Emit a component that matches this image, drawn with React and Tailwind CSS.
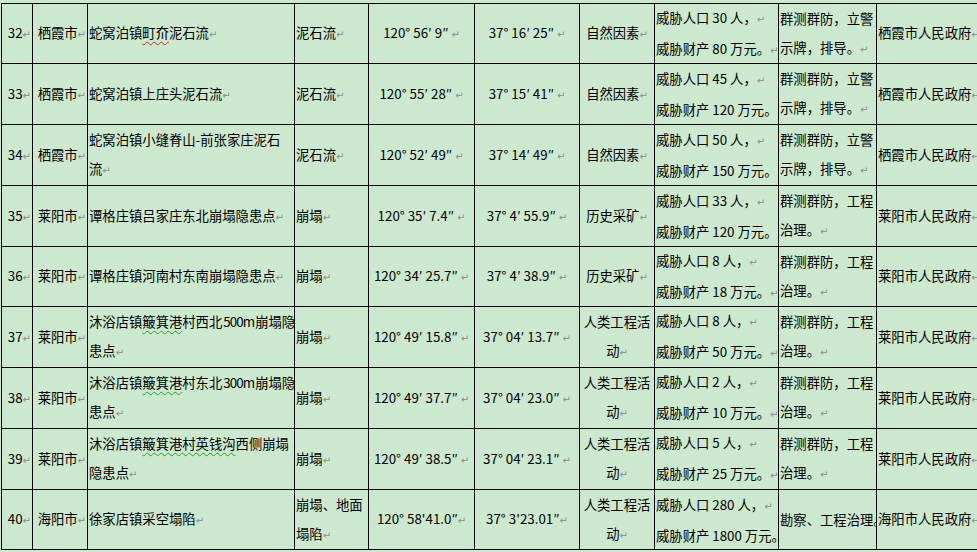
import React from "react";

const R = "↵";

const rows = [
  {
    n: "32", city: "栖霞市",
    loc: [["蛇窝泊镇", { t: "町夼", u: "red" }, "泥石流" + R]],
    type: ["泥石流" + R], lon: "120° 56′ 9″ " + R, lat: "37° 16′ 25″ " + R,
    cause: ["自然因素" + R],
    threat: ["威胁人口 30 人，" + R, "威胁财产 80 万元。" + R],
    measure: ["群测群防，立警", "示牌，排导。" + R], gov: "栖霞市人民政府" + R,
  },
  {
    n: "33", city: "栖霞市",
    loc: ["蛇窝泊镇上庄头泥石流" + R],
    type: ["泥石流" + R], lon: "120° 55′ 28″ " + R, lat: "37° 15′ 41″ " + R,
    cause: ["自然因素" + R],
    threat: ["威胁人口 45 人，" + R, "威胁财产 120 万元。"],
    measure: ["群测群防，立警", "示牌，排导。" + R], gov: "栖霞市人民政府" + R,
  },
  {
    n: "34", city: "栖霞市",
    loc: ["蛇窝泊镇小缝脊山-前张家庄泥石", "流" + R],
    type: ["泥石流" + R], lon: "120° 52′ 49″ " + R, lat: "37° 14′ 49″ " + R,
    cause: ["自然因素" + R],
    threat: ["威胁人口 50 人，" + R, "威胁财产 150 万元。"],
    measure: ["群测群防，立警", "示牌，排导。" + R], gov: "栖霞市人民政府" + R,
  },
  {
    n: "35", city: "莱阳市",
    loc: ["谭格庄镇吕家庄东北崩塌隐患点" + R],
    type: ["崩塌" + R], lon: "120° 35′ 7.4″ " + R, lat: "37° 4′ 55.9″ " + R,
    cause: ["历史采矿" + R],
    threat: ["威胁人口 33 人，" + R, "威胁财产 120 万元。"],
    measure: ["群测群防，工程", "治理。" + R], gov: "莱阳市人民政府" + R,
  },
  {
    n: "36", city: "莱阳市",
    loc: ["谭格庄镇河南村东南崩塌隐患点" + R],
    type: ["崩塌" + R], lon: "120° 34′ 25.7″ " + R, lat: "37° 4′ 38.9″ " + R,
    cause: ["历史采矿" + R],
    threat: ["威胁人口 8 人，" + R, "威胁财产 18 万元。" + R],
    measure: ["群测群防，工程", "治理。" + R], gov: "莱阳市人民政府" + R,
  },
  {
    n: "37", city: "莱阳市",
    loc: [["沐浴店镇", { t: "簸箕港", u: "green" }, "村西北", { t: "500m", num: true }, "崩塌隐"], "患点" + R],
    type: ["崩塌" + R], lon: "120° 49′ 15.8″ " + R, lat: "37° 04′ 13.7″ " + R,
    cause: ["人类工程活", "动" + R],
    threat: ["威胁人口 8 人，" + R, "威胁财产 50 万元。" + R],
    measure: ["群测群防，工程", "治理。" + R], gov: "莱阳市人民政府" + R,
  },
  {
    n: "38", city: "莱阳市",
    loc: [["沐浴店镇", { t: "簸箕港", u: "green" }, "村东北", { t: "300m", num: true }, "崩塌隐"], "患点" + R],
    type: ["崩塌" + R], lon: "120° 49′ 37.7″ " + R, lat: "37° 04′ 23.0″ " + R,
    cause: ["人类工程活", "动" + R],
    threat: ["威胁人口 2 人，" + R, "威胁财产 10 万元。" + R],
    measure: ["群测群防，工程", "治理。" + R], gov: "莱阳市人民政府" + R,
  },
  {
    n: "39", city: "莱阳市",
    loc: [["沐浴店镇", { t: "簸箕港村英钱沟", u: "green" }, "西侧崩塌"], "隐患点" + R],
    type: ["崩塌" + R], lon: "120° 49′ 38.5″ " + R, lat: "37° 04′ 23.1″ " + R,
    cause: ["人类工程活", "动" + R],
    threat: ["威胁人口 5 人，" + R, "威胁财产 25 万元。" + R],
    measure: ["群测群防，工程", "治理。" + R], gov: "莱阳市人民政府" + R,
  },
  {
    n: "40", city: "海阳市",
    loc: ["徐家店镇采空塌陷" + R],
    type: ["崩塌、地面", "塌陷" + R], lon: "120° 58'41.0″" + R, lat: "37° 3'23.01″" + R,
    cause: ["人类工程活", "动" + R],
    threat: ["威胁人口 280 人，" + R, "威胁财产 1800 万元。"],
    measure: ["勘察、工程治理。"], gov: "海阳市人民政府" + R,
  },
];

const alignCls = {
  left: "items-start pl-[1px]",
  center: "items-center",
  right: "items-end pr-[1px]",
};

function Mark() {
  return <span className="text-[10px] text-[#8c8c8c] font-['DejaVu_Sans',sans-serif]">{R}</span>;
}

function Text({ s }) {
  if (s.endsWith(R)) {
    return (
      <>
        {s.slice(0, -1)}
        <Mark />
      </>
    );
  }
  return s;
}

function Line({ line }) {
  if (typeof line === "string") return <Text s={line} />;
  return line.map((seg, i) => {
    if (typeof seg === "string") return <Text key={i} s={seg} />;
    if (seg.num) {
      return (
        <span key={i} className="mx-[1px] tracking-[-0.9px]">
          {seg.t}
        </span>
      );
    }
    return (
      <span
        key={i}
        className={`underline decoration-wavy underline-offset-[3px] decoration-1 ${seg.u === "red" ? "decoration-[#e02020]" : "decoration-[#2aa02a]"}`}
      >
        {seg.t}
      </span>
    );
  });
}

function Cell({ lines, align = "left" }) {
  return (
    <div className={`border-r border-b border-black flex flex-col justify-center overflow-hidden ${alignCls[align]}`}>
      {lines.map((l, i) => (
        <div key={i} className="whitespace-nowrap">
          <Line line={l} />
        </div>
      ))}
    </div>
  );
}

export default function App() {
  return (
    <div className="w-[977px] h-[552px] overflow-hidden bg-[#cce8cf] pt-[3px] pl-[1px] text-black text-[13.33px] leading-[29px] font-['Noto_Sans_CJK_SC',sans-serif]">
      <div className="w-[1100px] grid grid-cols-[31px_55px_207px_74px_106px_105px_75px_124px_98px_120px] grid-rows-[60px_61px_61px_61px_60px_61px_61px_61px_60px] border-t border-l border-black">
        {rows.map((r) => (
          <React.Fragment key={r.n}>
            <Cell lines={[r.n + R]} align="right" />
            <Cell lines={[r.city + R]} align="right" />
            <Cell lines={r.loc} />
            <Cell lines={r.type} />
            <Cell lines={[r.lon]} align="center" />
            <Cell lines={[r.lat]} align="center" />
            <Cell lines={r.cause} align="center" />
            <Cell lines={r.threat} />
            <Cell lines={r.measure} />
            <Cell lines={[r.gov]} />
          </React.Fragment>
        ))}
      </div>
    </div>
  );
}
